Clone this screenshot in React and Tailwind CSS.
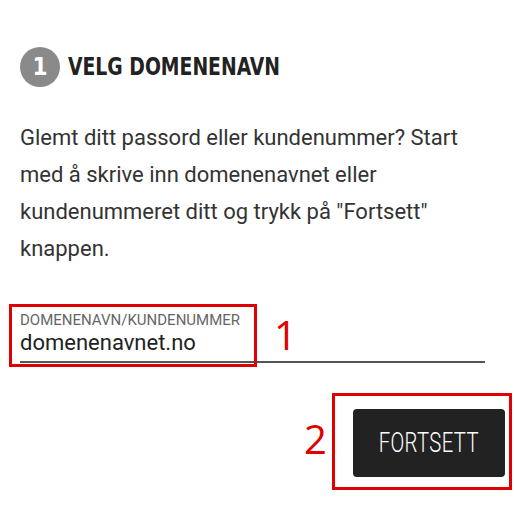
export default function App() {
  return (
    <div className="relative w-[514px] h-[514px] bg-white overflow-hidden">
      <div className="pl-5 pt-[47px]">
        <div className="flex items-center gap-[8px]">
          <div className="w-[40px] h-[40px] rounded-full bg-[#8a8a8a] flex items-center justify-center text-white text-[24px] font-bold leading-none" style={{ fontFamily: '"DejaVu Sans Condensed", "DejaVu Sans", sans-serif' }}>
            1
          </div>
          <h1 className="inline-block origin-left scale-x-[0.87] text-[24px] font-bold text-[#222] leading-none whitespace-nowrap" style={{ fontFamily: '"DejaVu Sans Condensed", "DejaVu Sans", sans-serif' }}>
            VELG DOMENENAVN
          </h1>
        </div>
        <p className="mt-[32px] w-[470px] text-[22px] leading-[37px] text-[#333]" style={{ fontFamily: 'Roboto, sans-serif' }}>
          Glemt ditt passord eller kundenummer? Start med å skrive inn domenenavnet eller kundenummeret ditt og trykk på "Fortsett" knappen.
        </p>
        <div className="mt-[44px] w-[465px] border-b-2 border-[#555] pb-[5px]" style={{ fontFamily: 'Roboto, sans-serif' }}>
          <div className="text-[15px] leading-[18px] text-[#666]">DOMENENAVN/KUNDENUMMER</div>
          <div className="mt-[1px] text-[22px] leading-[26px] text-[#222]">domenenavnet.no</div>
        </div>
        <div className="mt-[46px] flex justify-end pr-[9px]">
          <button className="w-[152px] h-[68px] rounded-[4px] bg-[#222] flex items-center justify-center text-white">
            <span className="inline-block text-[27px] font-light scale-x-[0.75] tracking-[0.5px]" style={{ fontFamily: 'Roboto, sans-serif' }}>FORTSETT</span>
          </button>
        </div>
      </div>

      {/* annotations */}
      <div className="absolute left-[9px] top-[304px] w-[248px] h-[63px] border-[3px] border-[#e00000]"></div>
      <div className="absolute left-[274px] top-[311px] text-[40px] leading-[48px] text-[#e00000]" style={{ fontFamily: '"Open Sans", sans-serif' }}>1</div>
      <div className="absolute left-[332px] top-[393px] w-[180px] h-[97px] border-[3px] border-[#e00000]"></div>
      <div className="absolute left-[304px] top-[415px] text-[40px] leading-[48px] text-[#e00000]" style={{ fontFamily: '"Open Sans", sans-serif' }}>2</div>
    </div>
  );
}
